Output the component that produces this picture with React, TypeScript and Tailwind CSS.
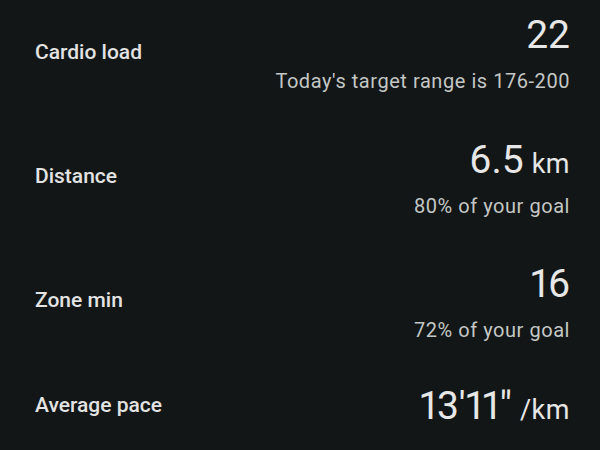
import React from "react";

interface StatRowProps {
  label: string;
  value: string;
  unit?: string;
  note?: string;
  first?: boolean;
  last?: boolean;
}

function StatRow({ label, value, unit, note, first, last }: StatRowProps) {
  const height = first ? "h-[115px] mb-[5px]" : last ? "h-[76px]" : "h-[124px]";
  return (
    <div className={`flex items-center justify-between ${height}`}>
      <span className={`text-[21px] font-medium text-[#e2e3e2] ${note ? "mb-[10px]" : ""}`}>{label}</span>
      <div className={`flex flex-col items-end ${note ? "mb-[8px]" : ""}`}>
        <div className="flex items-baseline gap-[8px] text-[#e6e7e6] leading-none">
          <span className="text-[39px] proportional-nums">{value}</span>
          {unit && <span className="text-[27px] tracking-[0.5px]">{unit}</span>}
        </div>
        {note && (
          <span className="mt-[16px] text-[20px] tracking-[0.55px] leading-none text-[#c4c7c5]">{note}</span>
        )}
      </div>
    </div>
  );
}

export default function App() {
  return (
    <div
      className="w-[600px] h-[450px] overflow-hidden bg-[#121616] pl-[35px] pr-[30px]"
      style={{ fontFamily: "Roboto, 'Open Sans', sans-serif" }}
    >
      <StatRow label="Cardio load" value="22" note="Today's target range is 176-200" first />
      <StatRow label="Distance" value="6.5" unit="km" note="80% of your goal" />
      <StatRow label="Zone min" value="16" note="72% of your goal" />
      <StatRow label="Average pace" value={"13'11\""} unit="/km" last />
    </div>
  );
}
